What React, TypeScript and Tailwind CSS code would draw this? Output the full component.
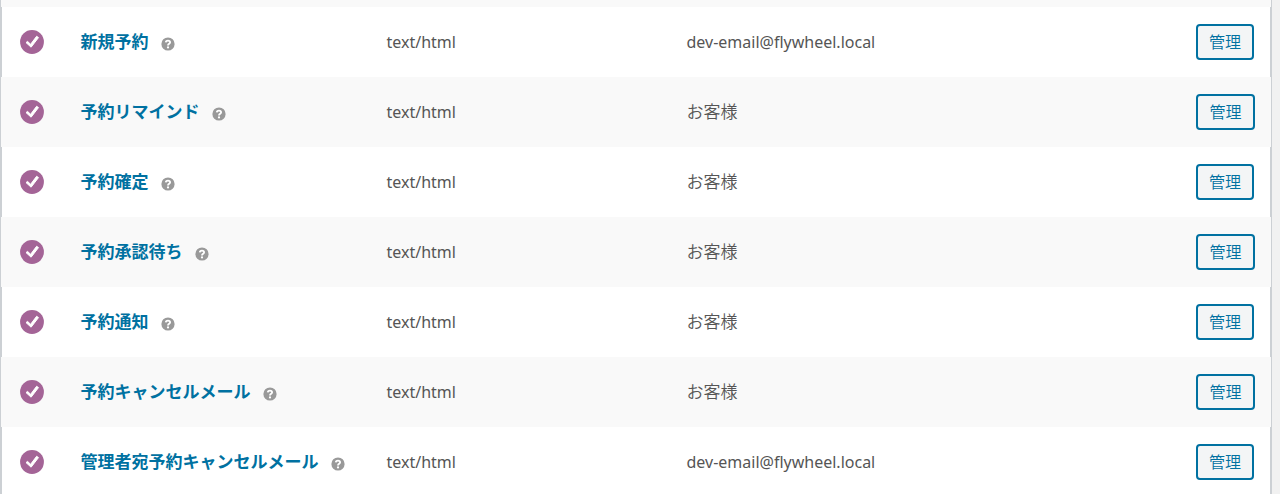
type Email = {
  title: string;
  recipient?: string;
};

const emails: Email[] = [
  { title: '新規予約', recipient: 'dev-email@flywheel.local' },
  { title: '予約リマインド' },
  { title: '予約確定' },
  { title: '予約承認待ち' },
  { title: '予約通知' },
  { title: '予約キャンセルメール' },
  { title: '管理者宛予約キャンセルメール', recipient: 'dev-email@flywheel.local' },
];

const EnabledIcon = () => (
  <svg className="block size-6" viewBox="0 0 24 24" aria-hidden="true">
    <circle cx="12" cy="12" r="11.9" fill="#a46497" />
    <path
      d="M6 12.6l1.6-1.2 3 2.9 6-8 1.9 1.3-7.4 9.6z"
      fill="#fff"
      stroke="#fff"
      strokeWidth="1"
      strokeLinejoin="round"
    />
  </svg>
);

const HelpIcon = () => (
  <svg className="block size-3.5" viewBox="0 0 14 14" aria-hidden="true">
    <circle cx="7" cy="7" r="6.6" fill="#999" />
    <path d="M4.8 5.4C4.9 3.1 9.1 3.1 9.1 5.4C9.1 6.8 7 6.8 7 8.4" fill="none" stroke="#fff" strokeWidth="1.8" />
    <circle cx="7" cy="10.4" r="1.1" fill="#fff" />
  </svg>
);

const EmailRow = ({ title, recipient }: Email) => {
  return (
    <tr className="h-[70px] border-[#ccd0d4] odd:border-x odd:bg-white even:bg-[#f9f9f9]">
      <td className="pl-[18px]">
        <EnabledIcon />
      </td>
      <td>
        <div className="flex items-center gap-3">
          <a href="#" className="font-bold text-[#0071a1]">{title}</a>
          <span className="pt-1">
            <HelpIcon />
          </span>
        </div>
      </td>
      <td className="text-base">text/html</td>
      {recipient ? <td className="text-base">{recipient}</td> : <td className="font-[350]">お客様</td>}
      <td className="pr-4 text-right">
        <a
          href="#"
          className="inline-block rounded-[4px] border-2 border-[#0071a1] bg-[#f3f5f6] px-[11px] py-1 align-middle text-base font-[350] text-[#0071a1]"
        >
          管理
        </a>
      </td>
    </tr>
  );
};

export default function App() {
  return (
    <div className="h-screen overflow-hidden bg-[#f1f1f1] pr-2 font-['Noto_Sans','Noto_Sans_CJK_JP',sans-serif] text-[17px] leading-6 text-[#555]">
      <div className="border-x border-[#ccd0d4] bg-[#f9f9f9] pt-[7px]">
        <table className="w-full table-fixed border-collapse">
          <colgroup>
            <col className="w-[79px]" />
            <col className="w-[306px]" />
            <col className="w-[300px]" />
            <col />
            <col className="w-[100px]" />
          </colgroup>
          <tbody>
            {emails.map((email) => (
              <EmailRow key={email.title} {...email} />
            ))}
          </tbody>
        </table>
      </div>
    </div>
  );
}
